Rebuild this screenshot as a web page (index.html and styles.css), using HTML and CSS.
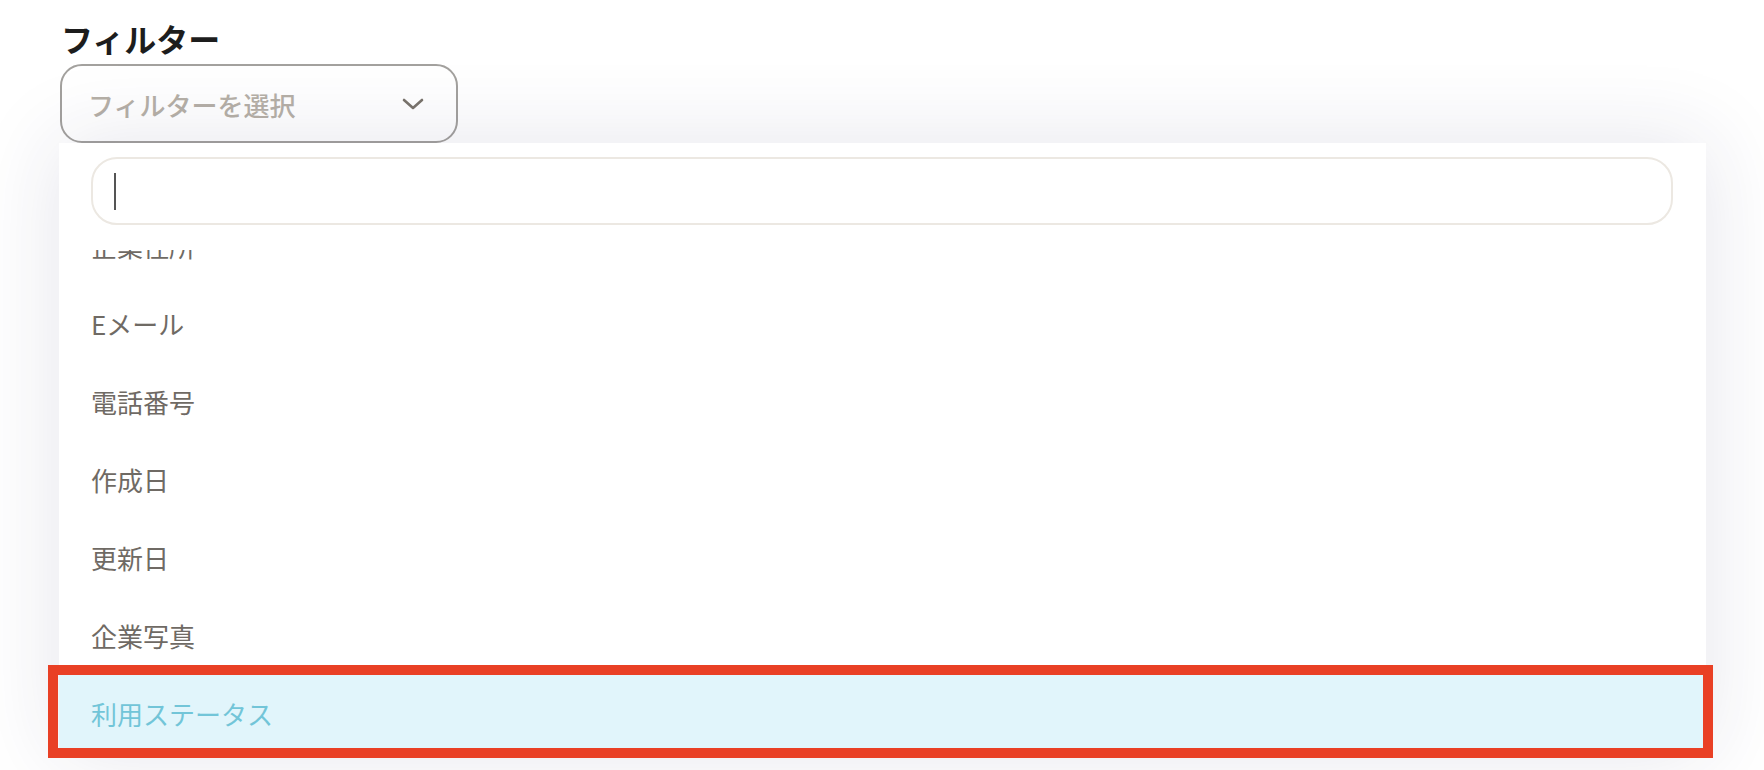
FILE: index.html
```html
<!DOCTYPE html>
<html lang="ja">
<head>
<meta charset="utf-8">
<title>フィルター</title>
<link rel="stylesheet" href="styles.css">
</head>
<body>
<div class="page">
  <h2 class="title">フィルター</h2>
  <div class="select">
    <span class="placeholder">フィルターを選択</span>
    <svg class="chevron" width="22" height="12" viewBox="0 0 22 12"><path d="M2 2 L11 10 L20 2" fill="none" stroke="#7a746c" stroke-width="2.6" stroke-linecap="round" stroke-linejoin="round"/></svg>
  </div>
  <div class="panel">
    <div class="search-wrap">
      <div class="search"><span class="caret"></span></div>
    </div>
    <ul class="list">
      <li class="item">企業住所</li>
      <li class="item">Eメール</li>
      <li class="item">電話番号</li>
      <li class="item">作成日</li>
      <li class="item">更新日</li>
      <li class="item">企業写真</li>
      <li class="item active">利用ステータス</li>
    </ul>
  </div>
</div>
</body>
</html>
```
FILE: styles.css
```css
html, body {
  margin: 0;
  padding: 0;
  background: #ffffff;
  height: 770px;
  overflow: hidden;
}
body {
  font-family: "Noto Sans CJK JP", "Noto Sans", sans-serif;
}
.page {
  padding-left: 60px;
  padding-top: 15px;
}
.title {
  margin: 0 0 0 1px;
  font-size: 32px;
  line-height: 46px;
  font-weight: 700;
  color: #1d1d1d;
  height: 49px;
}
.select {
  box-sizing: border-box;
  width: 398px;
  height: 79px;
  border: 2px solid #a3a19e;
  border-radius: 22px;
  display: flex;
  align-items: center;
  justify-content: space-between;
  padding: 0 32px 0 26px;
  background: #ffffff;
}
.placeholder {
  font-size: 26px;
  font-weight: 500;
  color: #b6b0a7;
  line-height: 1;
  margin-top: 2px;
}
.chevron {
  display: block;
}
.panel {
  position: relative;
  z-index: 2;
  margin-left: -1px;
  width: 1647px;
  background: #ffffff;
  box-shadow: 0 0 80px 4px rgba(40, 40, 90, 0.11);
}
.search-wrap {
  position: relative;
  z-index: 1;
  background: #ffffff;
  padding: 14px 33px 25px 32px;
}
.search {
  box-sizing: border-box;
  height: 68px;
  border: 2px solid #ece8e2;
  border-radius: 26px;
  display: flex;
  align-items: center;
  padding-left: 21px;
}
.caret {
  width: 2px;
  height: 37px;
  background: #555555;
}
.list {
  list-style: none;
  margin: -44px 0 0 0;
  padding: 0;
}
.item {
  position: relative;
  height: 78px;
  display: flex;
  align-items: center;
  padding-left: 32px;
  font-size: 26px;
  font-weight: 400;
  color: #6f6a64;
}
.item.active {
  background: #e1f5fb;
  color: #72c5d8;
}
.item.active::after {
  content: "";
  position: absolute;
  left: -11px;
  right: -7px;
  top: -9px;
  bottom: -6px;
  border: 10px solid #e94025;
  pointer-events: none;
}
```
